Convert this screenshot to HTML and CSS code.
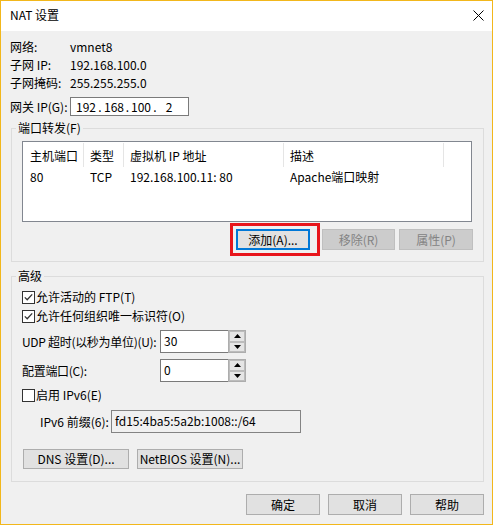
FILE: index.html
```html
<!DOCTYPE html>
<html lang="zh-CN">
<head>
<meta charset="utf-8">
<title>NAT 设置</title>
<link rel="stylesheet" href="styles.css">
</head>
<body>
<div class="window">
  <div class="titlebar">
    <span class="title">NAT 设置</span>
    <svg class="close" width="11" height="11" viewBox="0 0 11 11"><path d="M0.5 0.5 L10.5 10.5 M10.5 0.5 L0.5 10.5" stroke="#000" stroke-width="1" fill="none"/></svg>
  </div>
  <div class="content">
    <div class="info">
      <div class="row"><span class="lbl">网络:</span><span>vmnet8</span></div>
      <div class="row"><span class="lbl">子网 IP:</span><span>192.168.100.0</span></div>
      <div class="row"><span class="lbl">子网掩码:</span><span>255.255.255.0</span></div>
      <div class="row gw"><span class="lbl">网关 IP(G):</span>
        <div class="ipbox"><span class="oct">192</span><span class="dot">.</span><span class="oct">168</span><span class="dot d2">.</span><span class="oct">100</span><span class="dot">.</span><span class="oct">2</span></div>
      </div>
    </div>

    <fieldset class="group g1">
      <legend>端口转发(F)</legend>
      <div class="listview">
        <div class="lv-head">
          <span class="c c1">主机端口</span><span class="c c2">类型</span><span class="c c3">虚拟机 IP 地址</span><span class="c c4">描述</span>
        </div>
        <div class="lv-row">
          <span class="c c1">80</span><span class="c c2">TCP</span><span class="c c3">192.168.100.11: 80</span><span class="c c4">Apache端口映射</span>
        </div>
      </div>
      <div class="btnrow">
        <span class="hl"><button class="btn focus">添加(A)...</button></span>
        <button class="btn dis b-remove">移除(R)</button>
        <button class="btn dis b-prop">属性(P)</button>
      </div>
    </fieldset>

    <fieldset class="group g2">
      <legend>高级</legend>
      <div class="cbrow r-ftp"><span class="cb"><svg width="13" height="13" viewBox="0 0 13 13"><rect x="0.5" y="0.5" width="12" height="12" fill="#fff" stroke="#333"/><path d="M2.8 6.4 L5.2 8.8 L10.2 3.4" stroke="#333" stroke-width="1.3" fill="none"/></svg></span>允许活动的 FTP(T)</div>
      <div class="cbrow r-oui"><span class="cb"><svg width="13" height="13" viewBox="0 0 13 13"><rect x="0.5" y="0.5" width="12" height="12" fill="#fff" stroke="#333"/><path d="M2.8 6.4 L5.2 8.8 L10.2 3.4" stroke="#333" stroke-width="1.3" fill="none"/></svg></span>允许任何组织唯一标识符(O)</div>
      <div class="spinrow r-udp"><span class="slbl">UDP 超时(以秒为单位)(U):</span>
        <div class="spin"><div class="spin-in">30</div><div class="spin-btns"><span class="sb"><svg width="7" height="4" viewBox="0 0 7 4"><path d="M0 4 L3.5 0 L7 4Z" fill="#000"/></svg></span><span class="sb"><svg width="7" height="4" viewBox="0 0 7 4"><path d="M0 0 L3.5 4 L7 0Z" fill="#000"/></svg></span></div></div>
      </div>
      <div class="spinrow r-port"><span class="slbl">配置端口(C):</span>
        <div class="spin"><div class="spin-in">0</div><div class="spin-btns"><span class="sb"><svg width="7" height="4" viewBox="0 0 7 4"><path d="M0 4 L3.5 0 L7 4Z" fill="#000"/></svg></span><span class="sb"><svg width="7" height="4" viewBox="0 0 7 4"><path d="M0 0 L3.5 4 L7 0Z" fill="#000"/></svg></span></div></div>
      </div>
      <div class="cbrow r-v6"><span class="cb"><svg width="13" height="13" viewBox="0 0 13 13"><rect x="0.5" y="0.5" width="12" height="12" fill="#fff" stroke="#333"/></svg></span>启用 IPv6(E)</div>
      <div class="prefrow"><span class="plbl">IPv6 前缀(6):</span><div class="prefbox">fd15:4ba5:5a2b:1008::/64</div></div>
      <div class="grpbtns">
        <button class="btn wide">DNS 设置(D)...</button>
        <button class="btn wide">NetBIOS 设置(N)...</button>
      </div>
    </fieldset>

    <div class="footer">
      <button class="btn">确定</button>
      <button class="btn">取消</button>
      <button class="btn">帮助</button>
    </div>
  </div>
</div>
</body>
</html>
```

FILE: styles.css
```css
html, body {
  margin: 0;
  padding: 0;
  background: #ffffff;
}

body {
  font-family: "Noto Sans CJK SC", "Noto Sans", sans-serif;
  font-size: 12px;
  color: #000;
}

.window {
  width: 493px;
  height: 525px;
  box-sizing: border-box;
  border: 1px solid #f2b71b;
  background: #f0f0f0;
  display: flex;
  flex-direction: column;
}

.titlebar {
  height: 30px;
  flex: none;
  background: #fff;
  display: flex;
  align-items: center;
  padding: 0 8px 0 9px;
}

.title {
  font-size: 12px;
  line-height: 14px;
  margin-top: -2px;
}

.close {
  margin-left: auto;
  margin-right: 0;
  margin-top: -1px;
}

.content {
  padding: 7px 0 0 0;
  display: flex;
  flex-direction: column;
}

.info {
  padding-left: 9px;
}

.row {
  display: flex;
  align-items: center;
  height: 18px;
  line-height: 18px;
}

.lbl {
  width: 60px;
  flex: none;
}

.row.gw {
  margin-top: 5px;
  height: 19px;
}

.ipbox {
  box-sizing: border-box;
  width: 119px;
  height: 19px;
  border: 1px solid #7a7a7a;
  background: #fff;
  display: flex;
  align-items: center;
  padding-left: 4px;
  line-height: 16px;
}

.oct {
  width: 22px;
  text-align: center;
}

.dot {
  width: 6px;
  text-align: center;
}

.dot.d2 {
  width: 5px;
}

.group {
  margin: 0 0 0 10px;
  width: 473px;
  box-sizing: border-box;
  border: 1px solid #dcdcdc;
  padding: 0 0 0 10px;
  min-width: 0;
}

.group legend {
  padding: 0 2px;
  margin-left: -6px;
  line-height: 14px;
  font-size: 12px;
}

.g1 {
  margin-top: 5px;
  padding-top: 6px;
  padding-bottom: 11px;
}

.listview {
  width: 450px;
  height: 81px;
  box-sizing: border-box;
  border: 1px solid #828790;
  background: #fff;
}

.lv-head {
  display: flex;
  height: 25px;
  align-items: stretch;
  padding-top: 1px;
  box-sizing: border-box;
}

.lv-head .c {
  border-right: 1px solid #e5e5e5;
  display: flex;
  align-items: center;
}

.c {
  box-sizing: border-box;
  padding-left: 6px;
  white-space: nowrap;
  flex: none;
}

.c1 { width: 61px; padding-left: 7px; }
.c2 { width: 40px; }
.c3 { width: 160px; }
.c4 { width: 160px; }

.lv-row {
  display: flex;
  height: 17px;
  line-height: 17px;
  margin-top: 1px;
}

.btnrow {
  display: flex;
  margin-top: 7px;
  padding-left: 214px;
}

.btn {
  box-sizing: border-box;
  width: 74px;
  height: 21px;
  background: #e1e1e1;
  border: 1px solid #adadad;
  font-family: inherit;
  font-size: 12px;
  color: #000;
  padding: 0;
  margin: 0;
  line-height: 17px;
}

.btn.focus {
  border: 2px solid #0078d7;
}

.btn.dis {
  background: #cccccc;
  border-color: #bfbfbf;
  color: #838383;
}

.hl {
  position: relative;
  display: inline-block;
}

.hl::after {
  content: "";
  position: absolute;
  left: -6px;
  top: -6px;
  right: -10px;
  bottom: -6px;
  border: 3px solid #e8151b;
}

.b-remove {
  margin-left: 12px;
  width: 73px;
}

.b-prop {
  margin-left: 4px;
}

.g2 {
  margin-top: 7px;
  padding-top: 5px;
  padding-bottom: 12px;
}

.cbrow {
  display: flex;
  align-items: center;
  height: 18px;
  line-height: 18px;
}

.cb {
  width: 13px;
  height: 13px;
  margin-right: 1px;
  display: flex;
}

.r-oui { margin-top: 1px; }

.spinrow {
  display: flex;
  align-items: center;
  height: 23px;
}

.r-udp { margin-top: 5px; }
.r-port { margin-top: 6px; }
.r-v6 { margin-top: 4px; }

.slbl {
  width: 138px;
  flex: none;
  white-space: nowrap;
  letter-spacing: -0.3px;
}

.spin {
  display: flex;
  height: 23px;
}

.spin-in {
  box-sizing: border-box;
  width: 68px;
  height: 23px;
  border: 1px solid #7a7a7a;
  border-right: none;
  background: #fff;
  padding-left: 3px;
  line-height: 19px;
}

.spin-btns {
  box-sizing: border-box;
  width: 18px;
  height: 23px;
  border: 1px solid #adadad;
  background: #fff;
  display: flex;
  flex-direction: column;
  padding: 0 0 0 0;
}

.sb {
  flex: 1;
  background: #e5e5e5;
  border: 1px solid #bcbcbc;
  display: flex;
  align-items: center;
  justify-content: center;
}

.prefrow {
  display: flex;
  align-items: center;
  margin-top: 6px;
  height: 23px;
}

.plbl {
  width: 71px;
  padding-left: 18px;
  flex: none;
}

.prefbox {
  box-sizing: border-box;
  width: 190px;
  height: 23px;
  border: 1px solid #838383;
  background: #f0f0f0;
  padding-left: 3px;
  line-height: 19px;
}

.grpbtns {
  display: flex;
  margin-top: 16px;
  padding-left: 1px;
  gap: 8px;
}

.btn.wide {
  width: 106px;
  height: 20px;
  line-height: 16px;
}

.footer {
  display: flex;
  justify-content: flex-end;
  gap: 8px;
  margin-top: 12px;
  padding-right: 8px;
}
```
